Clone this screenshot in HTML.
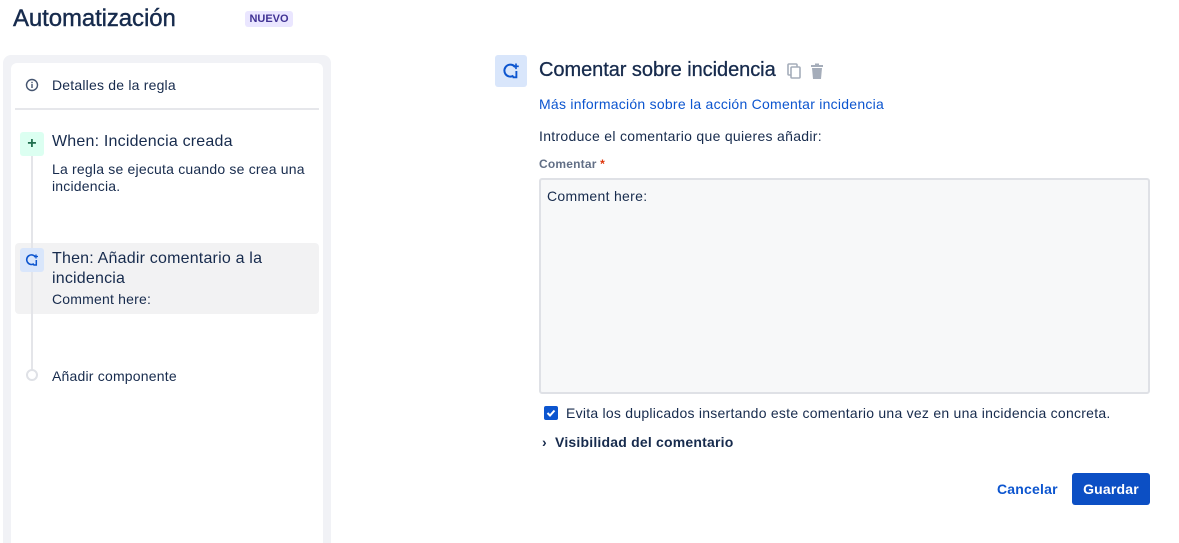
<!DOCTYPE html>
<html><head><meta charset="utf-8"><style>
*{margin:0;padding:0;box-sizing:border-box}
html,body{width:1179px;height:543px;overflow:hidden}
body{background:#fff;font-family:"Liberation Sans",sans-serif;color:#172b4d;position:relative;letter-spacing:0.2px}
.a{position:absolute;white-space:nowrap}
</style></head><body>
<div class="a" style="left:13px;top:5px;font-size:24px;color:#172b4d;letter-spacing:-0.1px;-webkit-text-stroke:0.4px #172b4d">Automatización</div>
<div class="a" style="left:245px;top:11px;height:16px;width:48px;background:#eae6ff;border-radius:3px;color:#403294;font-size:11px;font-weight:bold;text-align:center;line-height:16px;letter-spacing:0">NUEVO</div>
<div class="a" style="left:3px;top:55px;width:328px;height:488px;background:#f1f2f6;border-radius:8px 8px 0 0"></div>
<div class="a" style="left:11px;top:63px;width:312px;height:480px;background:#fff;border-radius:6px 6px 0 0"></div>
<svg class="a" style="left:25px;top:78px" width="14" height="14" viewBox="0 0 14 14"><circle cx="7" cy="7" r="5.5" fill="none" stroke="#44546f" stroke-width="1.4"/><rect x="6.3" y="6" width="1.4" height="4" fill="#44546f"/><rect x="6.3" y="3.8" width="1.4" height="1.4" fill="#44546f"/></svg>
<div class="a" style="left:52px;top:77px;font-size:14px">Detalles de la regla</div>
<div class="a" style="left:15px;top:108px;width:304px;height:2px;background:#e6e7eb"></div>
<div class="a" style="left:31px;top:155px;width:2px;height:215px;background:#e4e5e9"></div>
<div class="a" style="left:15px;top:243px;width:304px;height:71px;background:#f2f2f3;border-radius:4px"></div>
<div class="a" style="left:31px;top:243px;width:2px;height:71px;background:#e4e5e9"></div>
<div class="a" style="left:20px;top:132px;width:24px;height:24px;background:#dcfff1;border-radius:3px;color:#216e4e;font-size:16px;font-weight:bold;text-align:center;line-height:24px">+</div>
<div class="a" style="left:52px;top:133px;font-size:16px">When: Incidencia creada</div>
<div class="a" style="left:52px;top:161px;font-size:14px;line-height:17px">La regla se ejecuta cuando se crea una<br>incidencia.</div>
<div class="a" style="left:20px;top:248px;width:24px;height:24px;background:#d9e6fb;border-radius:3px"></div>
<svg class="a" style="left:24px;top:252px" width="16" height="16" viewBox="0 0 16 16"><path d="M11.5 5A4.8 4.8 0 1 0 10 11.8" fill="none" stroke="#0c55cf" stroke-width="1.6"/><path d="M12.3 8v5h-3" fill="none" stroke="#0c55cf" stroke-width="1.5"/><path d="M12 2.5v4M10 4.5h4" stroke="#0c55cf" stroke-width="1.3"/></svg>
<div class="a" style="left:52px;top:249px;font-size:16px;line-height:20px">Then: Añadir comentario a la<br>incidencia</div>
<div class="a" style="left:52px;top:291px;font-size:14px">Comment here:</div>
<div class="a" style="left:26px;top:369px;width:12px;height:12px;border:2px solid #dfe1e6;border-radius:50%;background:#fff"></div>
<div class="a" style="left:52px;top:368px;font-size:14px">Añadir componente</div>

<div class="a" style="left:495px;top:55px;width:32px;height:32px;background:#d9e6fb;border-radius:3px"></div>
<svg class="a" style="left:501px;top:61px" width="20" height="20" viewBox="0 0 16 16"><path d="M11.5 5A4.8 4.8 0 1 0 10 11.8" fill="none" stroke="#0c55cf" stroke-width="1.6"/><path d="M12.3 8v5h-3" fill="none" stroke="#0c55cf" stroke-width="1.5"/><path d="M12 2v4.5M9.8 4.2h4.4" stroke="#0c55cf" stroke-width="1.3"/></svg>
<div class="a" style="left:539px;top:59px;font-size:20px;letter-spacing:-0.05px;-webkit-text-stroke:0.3px #172b4d">Comentar sobre incidencia</div>
<svg class="a" style="left:785px;top:62px" width="18" height="18" viewBox="0 0 18 18"><rect x="3" y="2" width="9" height="11" rx="1" fill="none" stroke="#a5adba" stroke-width="1.6"/><rect x="6" y="5" width="9" height="11" rx="1" fill="#fff" stroke="#a5adba" stroke-width="1.6"/></svg>
<svg class="a" style="left:808px;top:62px" width="18" height="18" viewBox="0 0 18 18"><rect x="3" y="3" width="12" height="2" fill="#a5adba"/><rect x="7" y="1.5" width="4" height="2" fill="#a5adba"/><path d="M4 6h10l-1 11H5z" fill="#a5adba"/></svg>
<div class="a" style="left:539px;top:96px;font-size:14px;color:#0c55cf;letter-spacing:0.25px">Más información sobre la acción Comentar incidencia</div>
<div class="a" style="left:539px;top:128px;font-size:14px;letter-spacing:0.3px">Introduce el comentario que quieres añadir:</div>
<div class="a" style="left:539px;top:157px;font-size:12px;font-weight:bold;color:#626f86">Comentar <span style="color:#de350b">*</span></div>
<div class="a" style="left:539px;top:178px;width:611px;height:216px;background:#f7f8f9;border:2px solid #dfe1e6;border-radius:3px"></div>
<div class="a" style="left:547px;top:188px;font-size:14px;letter-spacing:0.3px">Comment here:</div>
<div class="a" style="left:544px;top:406px;width:14px;height:14px;background:#0c55cf;border-radius:2px"></div>
<svg class="a" style="left:544px;top:406px" width="14" height="14" viewBox="0 0 14 14"><path d="M3.5 7l2.5 2.5 4.5-5" fill="none" stroke="#fff" stroke-width="2"/></svg>
<div class="a" style="left:566px;top:405px;font-size:14px;letter-spacing:0.25px">Evita los duplicados insertando este comentario una vez en una incidencia concreta.</div>
<div class="a" style="left:542px;top:434px;font-size:14px;font-weight:bold">›&nbsp; Visibilidad del comentario</div>
<div class="a" style="left:997px;top:481px;font-size:14px;font-weight:bold;color:#0c55cf">Cancelar</div>
<div class="a" style="left:1072px;top:473px;width:78px;height:32px;background:#0c4fc4;border-radius:3px;color:#fff;font-size:14px;font-weight:bold;text-align:center;line-height:32px">Guardar</div>
</body></html>
